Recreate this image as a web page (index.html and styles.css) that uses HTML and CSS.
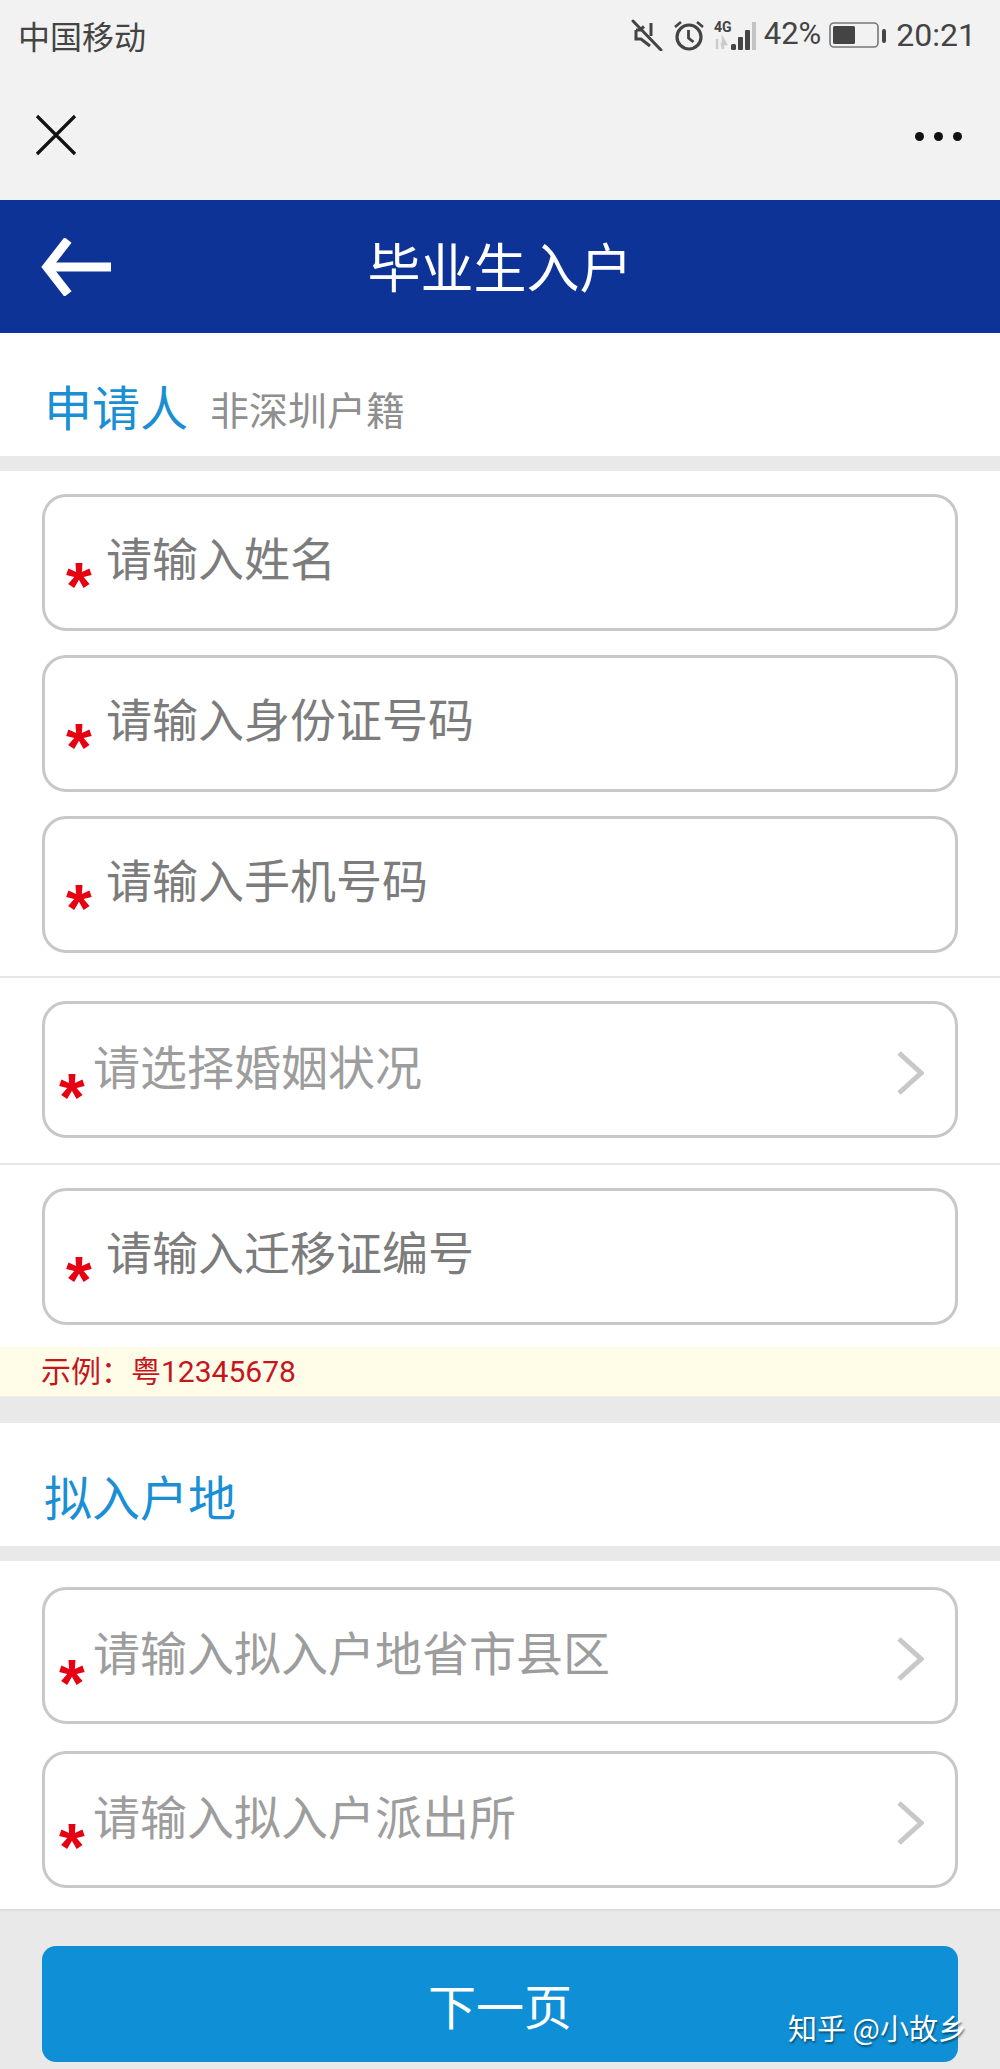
FILE: index.html
```html
<!DOCTYPE html>
<html lang="zh-CN">
<head>
<meta charset="utf-8">
<title>毕业生入户</title>
<link rel="stylesheet" href="styles.css">
</head>
<body>
<div class="page">
  <div class="chrome">
    <div class="status">
      <span class="carrier">中国移动</span>
      <div class="status-right">
        <svg class="ic-mute" width="32" height="32" viewBox="0 0 32 32" fill="none" stroke="#444" stroke-width="3"><path d="M5 11h4l4-3.5M20 4v13M5 11v9h5l9 7" /><path d="M2 2l28 29" stroke-linecap="round"/></svg>
        <svg class="ic-alarm" width="32" height="32" viewBox="0 0 32 32" fill="none" stroke="#444" stroke-width="3.2"><circle cx="16" cy="18" r="12"/><path d="M15.500 11v8l5 4" stroke-width="2.800"/><path d="M2 8l6-5M30 8l-6-5" stroke-width="2.600"/></svg>
        <svg class="ic-signal" width="48" height="32" viewBox="0 0 48 32">
          <text x="0" y="13" class="net">4G</text>
          <path d="M3 20v10M8 25h4l-3-5v10z" stroke="#ccc" stroke-width="2.500" fill="#ccc"/>
          <rect x="17" y="25" width="5" height="6" rx="1.500" fill="#444"/>
          <rect x="24" y="18" width="5" height="13" rx="1" fill="#444"/>
          <rect x="31" y="11" width="5" height="20" rx="1" fill="#444"/>
          <rect x="38" y="3" width="4" height="28" fill="#c4c4c4"/>
        </svg>
        <span class="pct">42%</span>
        <svg class="ic-batt" width="58" height="28" viewBox="0 0 58 28"><rect x="1" y="2" width="48" height="24" rx="4" fill="none" stroke="#777" stroke-width="1.600"/><rect x="4" y="5" width="22" height="18" rx="1.500" fill="#444"/><rect x="53" y="8" width="4" height="14" rx="2" fill="#444"/></svg>
        <span class="clock">20:21</span>
      </div>
    </div>
    <div class="wx-bar">
      <svg width="42" height="42" viewBox="0 0 42 42" fill="none" stroke="#111" stroke-width="3.200"><path d="M2 2l38 38M40 2L2 40"/></svg>
      <div class="dots"><i></i><i></i><i></i></div>
    </div>
  </div>

  <header class="app-head">
    <svg class="back" width="70" height="58" viewBox="0 0 70 58" fill="none" stroke="#fff" stroke-width="9"><path d="M27 2L6 29l21 27" /><path d="M8 29h62"/></svg>
    <h1>毕业生入户</h1>
  </header>

  <section class="sec-title first"><span class="main">申请人</span><span class="sub">非深圳户籍</span></section>
  <div class="rule-thick"></div>

  <div class="group g1">
    <div class="field"><b>*</b><span>请输入姓名</span></div>
    <div class="field"><b>*</b><span>请输入身份证号码</span></div>
    <div class="field"><b>*</b><span>请输入手机号码</span></div>
  </div>
  <div class="group g2">
    <div class="field pick"><b>*</b><span>请选择婚姻状况</span><svg class="chev" width="28" height="44" viewBox="0 0 28 44" fill="none" stroke="#c8c8c8" stroke-width="5"><path d="M3 2l22 20L3 42"/></svg></div>
  </div>
  <div class="group g3">
    <div class="field"><b>*</b><span>请输入迁移证编号</span></div>
  </div>
  <div class="hint">示例：粤12345678</div>
  <div class="gap"></div>

  <section class="sec-title"><span class="main">拟入户地</span></section>
  <div class="rule-thick"></div>

  <div class="group g4">
    <div class="field pick"><b>*</b><span>请输入拟入户地省市县区</span><svg class="chev" width="28" height="44" viewBox="0 0 28 44" fill="none" stroke="#c8c8c8" stroke-width="5"><path d="M3 2l22 20L3 42"/></svg></div>
    <div class="field pick"><b>*</b><span>请输入拟入户派出所</span><svg class="chev" width="28" height="44" viewBox="0 0 28 44" fill="none" stroke="#c8c8c8" stroke-width="5"><path d="M3 2l22 20L3 42"/></svg></div>
  </div>

  <footer class="foot"><button class="next">下一页</button></footer>
  <div class="mark">知乎 @小故乡</div>
</div>
</body>
</html>
```
FILE: styles.css
```css
* { box-sizing: border-box; }
html, body { margin: 0; padding: 0; }
body { font-family: "Noto Sans CJK SC", "Noto Sans", sans-serif; background: #fff; }
.page { position: relative; width: 1000px; height: 2069px; overflow: hidden; display: flex; flex-direction: column; }

.chrome { height: 200px; background: #f2f2f2; flex: none; }
.status { height: 70px; display: flex; justify-content: space-between; align-items: center; padding: 0 24px 0 18px; color: #444; }
.carrier { font-size: 32px; }
.status-right { display: flex; align-items: center; font-family: Roboto, sans-serif; }
.ic-mute { margin-right: 10px; }
.ic-alarm { margin-right: 9px; }
.ic-signal { margin-right: 0; }
.net { font: bold 14px Roboto, sans-serif; fill: #444; }
.pct { font-size: 31px; margin: 0 8px 4px 2px; }
.ic-batt { margin-right: 9px; }
.clock { font-size: 32px; }
.wx-bar { height: 130px; display: flex; justify-content: space-between; align-items: center; padding: 0 38px 0 35px; margin-top: 0; }
.dots { display: flex; gap: 10px; margin-top: 2px; }
.dots i { width: 9px; height: 9px; border-radius: 50%; background: #111; }

.app-head { height: 133px; flex: none; background: #0d3397; position: relative; display: flex; align-items: center; justify-content: center; }
.app-head h1 { margin: 0 0 4px; font-size: 53px; font-weight: 400; color: #fff; }
.back { position: absolute; left: 41px; top: 38px; }

.sec-title { height: 123px; flex: none; padding: 0 0 0 44px; display: flex; align-items: flex-end; }
.sec-title .main { font-size: 48px; line-height: 70px; color: #1a8fd3; margin-bottom: 16px; }
.sec-title .sub { font-size: 39px; line-height: 60px; color: #8f8f8f; margin: 0 0 18px 22px; }
.rule-thick { height: 15px; background: #e9e9e9; flex: none; }

.group { display: flex; flex-direction: column; padding: 0 42px; flex: none; border-bottom: 2px solid #e6e6e6; }
.g1 { padding-top: 23px; padding-bottom: 23px; gap: 24px; }
.g2 { padding-top: 23px; padding-bottom: 25px; }
.g3 { padding-top: 23px; padding-bottom: 22px; border-bottom: 0; }
.g4 { padding-top: 26px; padding-bottom: 21px; gap: 27px; border-bottom: 2px solid #ddd; }

.field { height: 137px; border: 3px solid #c8c8c8; border-radius: 24px; display: flex; align-items: center; padding: 0 0 0 21px; position: relative; }
.field b { font: bold 66px/1 "Liberation Sans", sans-serif; color: #e60012; width: 40px; height: 46px; margin-top: 26px; flex: none; }
.field span { font-size: 46px; color: #7c7c7c; margin: -14px 0 0 0; line-height: 60px; }
.field.pick { padding-left: 14px; }
.field.pick b { width: 34px; margin-top: 34px; }
.field.pick span { font-size: 47px; color: #9d9d9d; margin-top: -10px; }
.chev { position: absolute; right: 31px; top: 47px; }

.hint { height: 50px; flex: none; background: #fffde8; border-bottom: 1px solid #eee; padding-left: 41px; font-size: 30px; line-height: 50px; color: #c4161c; font-family: Roboto, "Noto Sans CJK SC", sans-serif; }
.gap { height: 26px; background: #e9e9e9; flex: none; }

.foot { flex: 1; background: #e9e9e9; padding: 35px 42px 0; }
.next { display: block; width: 916px; height: 116px; border: 0; border-radius: 14px; background: #0f90d6; color: #fff; font: 400 48px "Noto Sans CJK SC", sans-serif; }
.mark { position: absolute; left: 788px; top: 2006px; font-size: 29px; color: #fff; text-shadow: 1px 2px 2px rgba(0,0,0,.45); }
```
